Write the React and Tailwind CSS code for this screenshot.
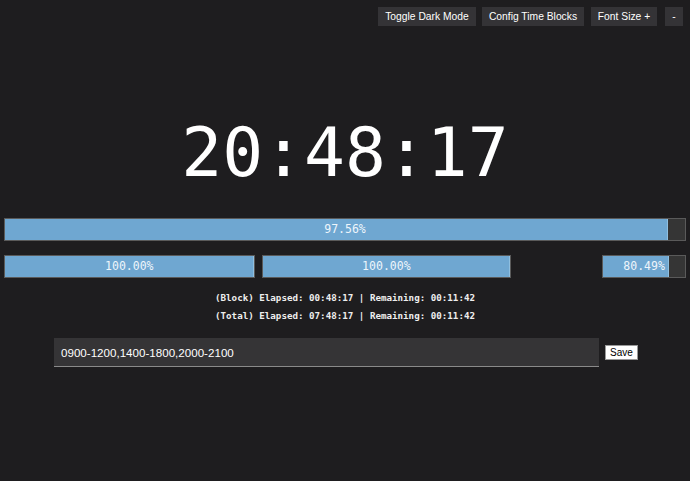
import React, { useState } from "react";

const mono = { fontFamily: '"DejaVu Sans Mono", "Liberation Mono", monospace' };

function Bar({ pct, label, className }) {
  return (
    <div
      className={`relative h-[23px] bg-[#353535] border border-[#5a5a5a] ${className}`}
    >
      <div
        className="absolute left-0 top-0 bottom-0 bg-[#6fa7d1] border-r border-[#8fbfe0]"
        style={{ width: `${pct}%` }}
      />
      <span
        className="absolute inset-0 flex items-center justify-center text-[11.5px] text-[#eef5fb]"
        style={mono}
      >
        {label}
      </span>
    </div>
  );
}

function App() {
  const [blocks, setBlocks] = useState("0900-1200,1400-1800,2000-2100");

  return (
    <div
      className="w-[690px] h-[481px] bg-[#1e1d1f] text-white overflow-hidden"
      style={{ fontFamily: '"Liberation Sans", Arial, sans-serif' }}
    >
      <div className="flex justify-end pt-[7px] pr-[7px]">
        <button className="h-[19px] w-[98px] bg-[#343336] text-[10.3px] text-white">Toggle Dark Mode</button>
        <button className="h-[19px] w-[102px] ml-[6px] bg-[#343336] text-[10.3px] text-white">Config Time Blocks</button>
        <button className="h-[19px] w-[66px] ml-[7px] bg-[#343336] text-[10.3px] text-white">Font Size +</button>
        <button className="h-[19px] w-[18px] ml-[8px] bg-[#343336] text-[10.3px] text-white">-</button>
      </div>

      <div
        className="mt-[87px] h-[80px] flex items-center justify-center text-[68px] leading-none text-white"
        style={mono}
      >
        20:48:17
      </div>

      <div className="mt-[25px] px-[4px]">
        <Bar pct={97.56} label="97.56%" className="w-full" />
      </div>

      <div className="mt-[14px] flex px-[4px]">
        <Bar pct={100} label="100.00%" className="w-[251px]" />
        <Bar pct={100} label="100.00%" className="w-[250px] ml-[7px]" />
        <Bar pct={80.49} label="80.49%" className="w-[84px] ml-[91px]" />
      </div>

      <div
        className="mt-[13px] flex flex-col items-center gap-[5px] text-[9.2px] leading-[13px] text-[#eeeeee] font-bold"
        style={mono}
      >
        <div>(Block) Elapsed: 00:48:17 | Remaining: 00:11:42</div>
        <div>(Total) Elapsed: 07:48:17 | Remaining: 00:11:42</div>
      </div>

      <div className="mt-[16px] flex items-center pl-[54px]">
        <input
          value={blocks}
          onChange={(e) => setBlocks(e.target.value)}
          className="w-[545px] h-[29px] px-[7px] bg-[#353436] text-white text-[11.6px] border-b-[1.5px] border-[#8a8a8a] outline-none"
        />
        <button className="ml-[6px] h-[15px] px-[4px] bg-white text-black text-[10px] leading-none border border-[#999]">
          Save
        </button>
      </div>
    </div>
  );
}

export default App;
